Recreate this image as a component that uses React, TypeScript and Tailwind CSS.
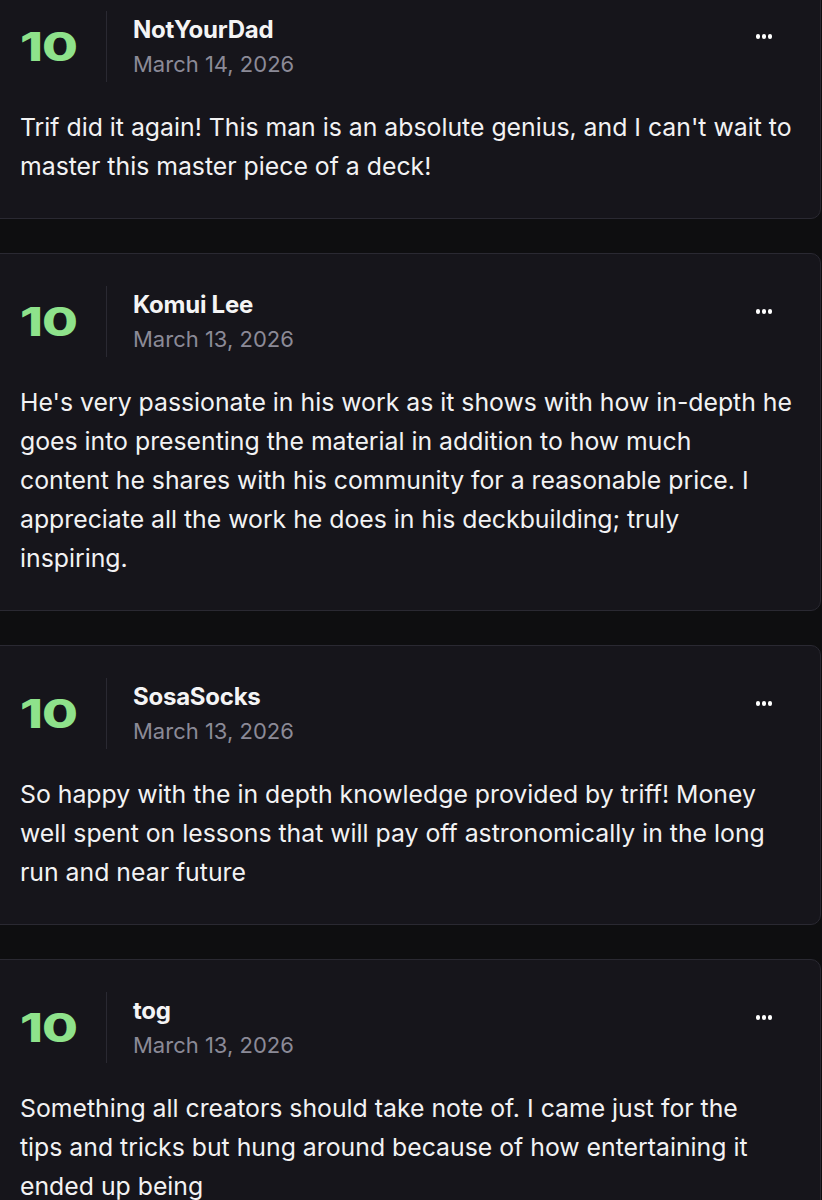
import React from "react";

type Review = {
  score: number;
  name: string;
  date: string;
  lines: string[];
};

const REVIEWS: Review[] = [
  {
    score: 10,
    name: "NotYourDad",
    date: "March 14, 2026",
    lines: [
      "Trif did it again! This man is an absolute genius, and I can't wait to",
      "master this master piece of a deck!",
    ],
  },
  {
    score: 10,
    name: "Komui Lee",
    date: "March 13, 2026",
    lines: [
      "He's very passionate in his work as it shows with how in-depth he",
      "goes into presenting the material in addition to how much",
      "content he shares with his community for a reasonable price. I",
      "appreciate all the work he does in his deckbuilding; truly",
      "inspiring.",
    ],
  },
  {
    score: 10,
    name: "SosaSocks",
    date: "March 13, 2026",
    lines: [
      "So happy with the in depth knowledge provided by triff! Money",
      "well spent on lessons that will pay off astronomically in the long",
      "run and near future",
    ],
  },
  {
    score: 10,
    name: "tog",
    date: "March 13, 2026",
    lines: [
      "Something all creators should take note of. I came just for the",
      "tips and tricks but hung around because of how entertaining it",
      "ended up being",
    ],
  },
];

function MoreDots() {
  return (
    <button className="ml-auto mr-4 mt-[23px] flex items-center gap-[1.5px] self-start" aria-label="More">
      <span className="h-[4.5px] w-[4.5px] rounded-full bg-white" />
      <span className="h-[4.5px] w-[4.5px] rounded-full bg-white" />
      <span className="h-[4.5px] w-[4.5px] rounded-full bg-white" />
    </button>
  );
}

function ReviewCard({ review }: { review: Review }) {
  return (
    <div className="-ml-3 mr-px rounded-[10px] border border-[#2a2932] bg-[#16151b] pl-[31px] pr-[32px] pt-[32px] pb-[32px]">
      {/* header */}
      <div className="flex h-[71px] items-center">
        <div className="w-[86px]">
          <span className="inline-block origin-left scale-x-[1.3] text-[40px] font-extrabold leading-none tracking-[-0.02em] text-[#8ee28b]">
            {review.score}
          </span>
        </div>
        <div className="h-[71px] w-px bg-[#2a2932]" />
        <div className="flex flex-col pl-[26px]">
          <span className="text-[24px] font-bold leading-[34px] tracking-[-0.01em] text-[#f4f4f5]">{review.name}</span>
          <span className="text-[22px] leading-[34px] text-[#8b8a97]">{review.date}</span>
        </div>
        <MoreDots />
      </div>

      <div className="mt-[26px] text-[24.8px] leading-[39px] text-[#f2f2f3]">
        {review.lines.map((line, i) => (
          <p key={i} className="whitespace-nowrap">
            {line}
          </p>
        ))}
      </div>
    </div>
  );
}

export default function App() {
  return (
    <div
      className="min-h-screen w-[822px] overflow-hidden bg-[#0e0e10]"
      style={{ fontFamily: "Inter, 'Liberation Sans', sans-serif" }}
    >
      <div className="-mt-[22px] flex flex-col gap-[34px]">
        {REVIEWS.map((r) => (
          <ReviewCard key={r.name} review={r} />
        ))}
      </div>
    </div>
  );
}
